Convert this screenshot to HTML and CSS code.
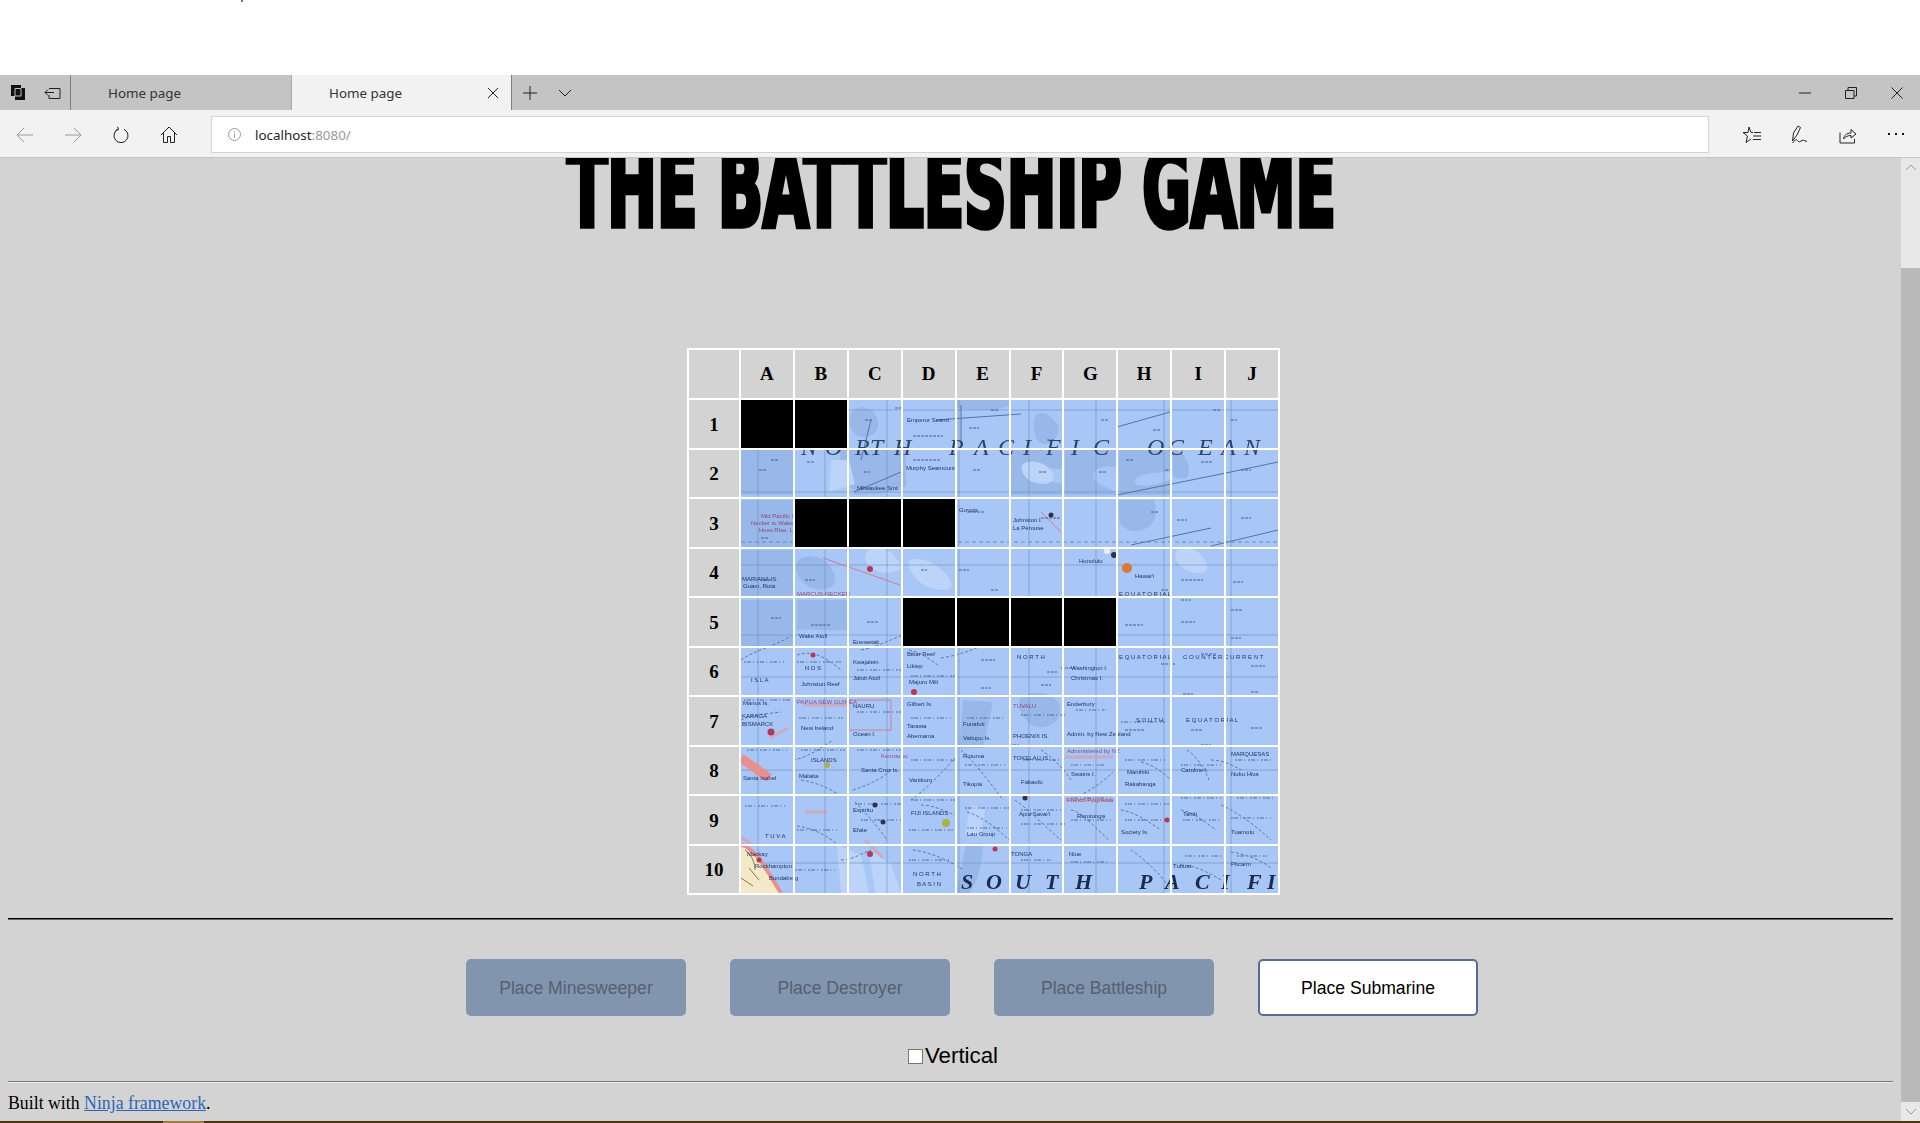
FILE: index.html
```html
<!DOCTYPE html>
<html lang="en">
<head>
    <meta charset="utf-8">
    <title>Home page</title>
    <link rel="stylesheet" href="styles.css">
</head>
<body>
    <div class="top-strip"><span class="speck"></span></div>

    <!-- Browser tabs -->
    <div class="tabbar">
        <div class="tab-tools">
            <span class="icon-btn">
                <svg width="16" height="17" viewBox="0 0 16 17"><path class="solid" d="M1 1h10v3h4v12H5v-4H1z"/><path class="gap" d="M5 4.500h6V12H5z"/></svg>
            </span>
            <span class="icon-btn">
                <svg width="18" height="16" viewBox="0 0 18 16"><path class="line" d="M5 3.500h11v10H5V10M1 7.500h9M4 4.500l-3 3 3 3"/></svg>
            </span>
        </div>
        <div class="tab">Home page</div>
        <div class="tab active">
            Home page
            <svg class="tab-close" width="12" height="12" viewBox="0 0 12 12"><path class="line" d="M1 1l10 10M11 1L1 11"/></svg>
        </div>
        <span class="icon-btn">
            <svg width="16" height="16" viewBox="0 0 16 16"><path class="line" d="M8 1v14M1 8h14"/></svg>
        </span>
        <span class="icon-btn">
            <svg width="14" height="8" viewBox="0 0 14 8"><path class="line" d="M1 1l6 6 6-6"/></svg>
        </span>
        <div class="spacer"></div>
        <span class="win-btn">
            <svg width="12" height="2" viewBox="0 0 12 2"><path class="line" d="M0 1h12"/></svg>
        </span>
        <span class="win-btn">
            <svg width="12" height="12" viewBox="0 0 12 12"><path class="line" d="M3 3V.5h8.500V9H9M.5 3.500H9V11.500H.5z"/></svg>
        </span>
        <span class="win-btn">
            <svg width="12" height="12" viewBox="0 0 12 12"><path class="line" d="M.5.5l11 11M11.500.5l-11 11"/></svg>
        </span>
    </div>

    <!-- Address bar -->
    <div class="toolbar">
        <span class="tool-btn">
            <svg width="18" height="16" viewBox="0 0 18 16"><path class="line faded" d="M17 8H1M8 1L1 8l7 7"/></svg>
        </span>
        <span class="tool-btn">
            <svg width="18" height="16" viewBox="0 0 18 16"><path class="line faded" d="M1 8h16M10 1l7 7-7 7"/></svg>
        </span>
        <span class="tool-btn">
            <svg width="16" height="18" viewBox="0 0 16 18"><path class="line" d="M5 3.300A7 7 0 1 0 11 3.300M4.500.8L5.500 3.500 2.500 4.500"/></svg>
        </span>
        <span class="tool-btn">
            <svg width="18" height="18" viewBox="0 0 18 18"><path class="line" d="M1 9l8-8 8 8M3.500 7v9.500H7.500V10.500h3v6h4V7"/></svg>
        </span>
        <div class="address">
            <svg width="13" height="13" viewBox="0 0 13 13"><circle class="line faded" cx="6.500" cy="6.500" r="6"/><path class="line faded" d="M6.500 5.500v4.500M6.500 3v1.200"/></svg>
            <span class="host">localhost<span class="port">:8080/</span></span>
        </div>
        <span class="tool-btn">
            <svg width="20" height="18" viewBox="0 0 20 18"><path class="line" d="M7 1l2 5.500h2M1 6.500h5L7 1M1 6.500l4.500 3.500L4 16.500l5-3.500M12 6.500h7M11 10h8M11 13.500h8"/></svg>
        </span>
        <span class="tool-btn">
            <svg width="18" height="20" viewBox="0 0 18 20"><path class="line" d="M1.500 16L2.500 8 7 1l2.500 1.500L6 10zM1.500 18c2-3 4-4 5-2.500s2 2 3.500.5 3-.5 6 .5"/></svg>
        </span>
        <span class="tool-btn">
            <svg width="18" height="18" viewBox="0 0 18 18"><path class="line" d="M1 6.500v10.500h14.500V13M4.500 13c.5-3.500 3-6 7.500-6V3.500L17 8l-5 4V9.500c-3 0-5.500 1-7.500 3.500z"/></svg>
        </span>
        <span class="tool-btn">
            <svg width="16" height="3" viewBox="0 0 16 3"><path class="solid" d="M0 0h2v2H0zM7 0h2v2H7zM14 0h2v2h-2z"/></svg>
        </span>
    </div>

    <div class="viewport">
        <div class="page">
            <h1 class="title">THE BATTLESHIP GAME</h1>

            <!-- The board, the sea chart lies under the cells -->
            <div class="board">
                <svg class="chart" viewBox="0 0 537 493">
                    <rect class="sea" width="537" height="493"/>

                    <!-- depth shading -->
                    <path class="deep" d="M113 10c8-6 18-2 22 6s3 16-6 20-18-2-20-10 0-12 4-16zM215 0h53v6c-12 4-30 6-53 2zM296 14c8-4 14 2 20 10s-4 22-14 20-12-24-6-30zM0 50h52v45H0zM98 50h19v45c-10-6-16-20-19-45zM113 50h52v36c-20 10-40 8-52 9zM270 50h53v18c-10 4-20-4-28 0s-2 14 14 14 14 6 14 13h-53zM324 50h53v18c-12-4-28 0-24 10s14 6 24 17h-53zM378 50h52v22c-14 0-34 2-36 9s20 6 36-2v16h-52zM432 50c10 0 14 8 16 18s-6 14-16 8zM0 100h52v48H0zM378 100h35c4 12 2 26-12 30s-22-4-23-10zM0 150h52v48H0zM60 158c16-6 30 4 34 18s-18 18-30 8-10-22-4-26zM0 200h52v48H0zM56 200h52v30c-20 2-34-2-52 0zM280 297c14-8 30-4 36 4s4 24-14 26-28-20-22-30zM222 300l30 2-10 46H218zM225 445l16-2c2 18-4 36-12 50h-14z"/>
                    <path class="pale" d="M90 60l18 0 6 24-26 8zM282 64c10-6 26 0 30 10s-10 12-20 8-14-14-10-18zM128 150c14-6 24 2 30 12s-12 14-24 8-12-16-6-20zM170 160c12-4 30 6 38 18s-4 14-18 10-28-24-20-28zM96 445l24 10 8 38h-28zM128 450l22 14 10 29h-26zM230 405l14 4-4 28-16-4zM440 148c12-2 22 6 26 16s-14 12-24 4-10-18-2-20zM170 100c8 0 12 4 12 8s-6 8-12 4-6-12 0-12zM224 205l40 10-6 26-30-8z"/>

                    <!-- meridians and parallels -->
                    <path class="grid-line" d="M17 0V493M84 0V493M146 0V493M218 0V493M288 0V493M355 0V493M423 0V493M490 0V493"/>
                    <path class="grid-line" d="M0 10H537M0 92H537M0 165H537M0 235H537M0 277H537M0 370H537M0 463H537"/>
                    <path class="dash-line" d="M0 142H537"/>
                    <path class="ridge" d="M376 27L429 12M376 95L485 73M485 73L537 62M195 20L280 14M113 92L160 72M470 146L537 130M390 145L470 128M120 60L130 20M220 5V44"/>
                    <path class="pink-line" d="M82 158L159 185M108 300H150V330H108zM300 112L320 132"/>

                    <!-- coast of Queensland and the reefs above it -->
                    <path class="land" d="M0 445L5 446L18 458L29 475L40 493H0z"/>
                    <path class="coast" d="M0 445L5 446L18 458L29 475L40 493"/>
                    <path class="coast wide" d="M0 358L14 368L28 378"/>
                    <path class="coast thin" d="M0 437L12 445M29 338L47 328M62 305H106M324 357H372M324 400H372M240 296H268M64 412H86M124 440L142 458"/>
                    <path class="shore" d="M4 450c6 4 10 12 10 20M8 468l10 12M0 478l12 8"/>

                    <!-- island chains -->
                    <path class="chain" d="M0 260c14-10 30-12 50-24M56 255c14-5 28 1 44 15M120 250c20-4 32-12 50-18M168 250c10 2 20 8 30 16M200 258c14-2 26-6 40-12M0 320c12-6 26-6 40-8M52 360c14-2 28-12 40-20M60 380c14 2 28 8 40 16M112 390c12-4 28-10 38-20M170 400c14-10 32-28 44-42M220 350c14 12 30 34 42 50M300 350c10 6 22 18 30 30M338 396c12-6 24-14 34-24M400 362c10 2 22 10 30 18M446 350c10 6 18 20 22 30M470 360c10 0 20 4 30 10M56 426c14 2 28 8 40 18M114 402c10 10 24 26 32 38M180 405c12 0 24 6 36 11M226 412c14 4 30 16 42 28M274 400c14 10 32 28 46 40M330 410c12 2 26 20 38 30M380 410c14 2 28 12 40 20M440 410c12 2 24 12 35 20M480 405c18 8 36 22 50 35M100 460c10 0 20-6 30-10M172 450c16 2 36 10 50 20M390 450c12 8 30 24 40 40M440 465c14 0 28 8 40 15M490 452c14 2 30 8 40 16"/>
                    <path class="speckle" d="M3 262h40M56 262h44M116 270h46M170 276h44M3 300h46M58 318h44M116 312h44M170 318h40M226 318h38M280 315h44M335 310h30M380 322h44M6 350h40M60 350h44M116 350h46M170 360h46M224 365h40M282 360h40M330 365h34M384 360h40M440 365h40M494 360h36M6 395h40M62 395h44M114 404h46M170 400h44M224 408h44M280 410h40M330 398h40M384 404h44M440 398h40M496 398h36M4 406h40M56 430h40M120 420h40M168 430h44M226 428h40M280 424h44M330 420h40M384 420h42M442 420h36M490 418h40M54 470h40M168 460h40M280 460h30M330 462h36M444 456h40M496 456h30"/>

                    <!-- soundings and short arrows -->
                    <path class="mark" d="M22 17h10M124 20h7M154 8h7M172 36h30M228 28h10M250 10h7M306 40h8M360 20h8M412 30h8M472 10h8M490 20h6M18 70h8M30 60h8M66 62h8M123 72h6M172 60h28M232 70h8M298 72h8M358 72h7M385 60h8M424 70h6M460 62h12M500 70h10M20 138h8M60 148h6M180 112h18M228 112h16M300 118h20M410 112h8M436 120h10M500 118h10M20 180h10M64 180h10M180 170h6M218 170h10M250 190h8M420 190h8M440 180h22M492 182h10M440 200h10M490 210h12M30 218h10M70 225h20M126 222h12M170 225h4M226 222h2M270 225h10M384 225h18M440 222h14M490 238h10M240 260h14M306 272h10M420 264h14M460 254h16M510 266h14M320 268h14M240 288h10M300 285h10M442 294h10M510 292h8M450 330h12M510 328h12M460 345h10M268 345h10M384 330h20"/>

                    <!-- towns and atolls -->
                    <circle class="spot red" cx="129" cy="169" r="3"/>
                    <circle class="spot dark" cx="373" cy="155" r="3"/>
                    <circle class="spot orange" cx="386" cy="168" r="5"/>
                    <circle class="spot white" cx="366" cy="151" r="3"/>
                    <circle class="spot red" cx="173" cy="292" r="3"/>
                    <circle class="spot red" cx="72" cy="255" r="2.500"/>
                    <circle class="spot red" cx="30" cy="332" r="3.500"/>
                    <circle class="spot green" cx="86" cy="365" r="3"/>
                    <circle class="spot green" cx="205" cy="423" r="4"/>
                    <circle class="spot dark" cx="134" cy="405" r="2.500"/>
                    <circle class="spot dark" cx="142" cy="422" r="2.500"/>
                    <circle class="spot red" cx="426" cy="420" r="2.500"/>
                    <circle class="spot red" cx="129" cy="454" r="3"/>
                    <circle class="spot red" cx="254" cy="449" r="2.500"/>
                    <circle class="spot red" cx="18" cy="460" r="2.500"/>
                    <circle class="spot dark" cx="284" cy="398" r="2.500"/>
                    <circle class="spot red" cx="290" cy="240" r="2.500"/>
                    <circle class="spot dark" cx="310" cy="115" r="2.500"/>

                    <!-- ocean names -->
                    <text class="ocean" y="55" x="60 84 114 129 153 208 233 257 282 305 330 352 406 427 457 480 503">NORTHPACIFICOCEAN</text>
                    <text class="ocean south" y="489" x="220 245 274 304 334 398 424 454 480 506 526">SOUTHPACIFI</text>

                    <!-- small map lettering -->
                    <text class="label violet" x="20" y="118">Mid Pacific Mts.</text>
                    <text class="label violet" x="10" y="125">Necker to Wake</text>
                    <text class="label violet" x="18" y="132">Hess Rise, Line</text>
                    <text class="label" x="116" y="90">Milwaukee Smt.</text>
                    <text class="label" x="165" y="70">Murphy Seamount</text>
                    <text class="label" x="166" y="22">Emperor Seamt.</text>
                    <text class="label" x="218" y="112">Guyots</text>
                    <text class="label" x="272" y="122">Johnston I.</text>
                    <text class="label" x="272" y="130">La Pérouse</text>
                    <text class="label" x="1" y="181">MARIANA IS.</text>
                    <text class="label" x="2" y="188">Guam, Rota</text>
                    <text class="label violet" x="56" y="196">MARCUS-NECKER</text>
                    <text class="label" x="58" y="238">Wake Atoll</text>
                    <text class="label" x="112" y="244">Enewetak</text>
                    <text class="label" x="10" y="282">I S L A</text>
                    <text class="label" x="64" y="270">N D S</text>
                    <text class="label" x="60" y="286">Johnston Reef</text>
                    <text class="label" x="112" y="264">Kwajalein</text>
                    <text class="label" x="112" y="280">Jaluit Atoll</text>
                    <text class="label" x="166" y="256">Bikar Reef</text>
                    <text class="label" x="166" y="268">Likiep</text>
                    <text class="label" x="168" y="284">Majuro Mili</text>
                    <text class="label" x="338" y="163">Honolulu</text>
                    <text class="label" x="394" y="178">Hawai'i</text>
                    <text class="label" x="330" y="270">Washington I.</text>
                    <text class="label" x="330" y="280">Christmas I.</text>
                    <text class="label" x="378" y="196">E Q U A T O R I A L</text>
                    <text class="label" x="378" y="259">E Q U A T O R I A L</text>
                    <text class="label" x="442" y="259">C O U N T E R C U R R E N T</text>
                    <text class="label" x="276" y="259">N O R T H</text>
                    <text class="label" x="395" y="322">S O U T H</text>
                    <text class="label" x="445" y="322">E Q U A T O R I A L</text>
                    <text class="label" x="1" y="318">KARAGA</text>
                    <text class="label" x="1" y="326">BISMARCK</text>
                    <text class="label" x="2" y="305">Manus Is.</text>
                    <text class="label violet" x="56" y="304">PAPUA NEW GUINEA</text>
                    <text class="label" x="60" y="330">New Ireland</text>
                    <text class="label" x="112" y="308">NAURU</text>
                    <text class="label" x="112" y="336">Ocean I.</text>
                    <text class="label" x="166" y="306">Gilbert Is.</text>
                    <text class="label" x="166" y="328">Tarawa</text>
                    <text class="label" x="166" y="338">Abemama</text>
                    <text class="label violet" x="272" y="308">TUVALU</text>
                    <text class="label" x="222" y="326">Funafuti</text>
                    <text class="label" x="222" y="340">Vaitupu Is.</text>
                    <text class="label" x="272" y="338">PHOENIX IS.</text>
                    <text class="label" x="326" y="306">Enderbury</text>
                    <text class="label" x="326" y="336">Admin. by New Zealand</text>
                    <text class="label" x="2" y="380">Santa Isabel</text>
                    <text class="label" x="70" y="362">ISLANDS</text>
                    <text class="label" x="58" y="378">Malaita</text>
                    <text class="label" x="120" y="372">Santa Cruz Is.</text>
                    <text class="label violet" x="140" y="358">Kermadec</text>
                    <text class="label" x="168" y="382">Vanikoro</text>
                    <text class="label" x="222" y="358">Rotuma</text>
                    <text class="label" x="222" y="386">Tikopia</text>
                    <text class="label" x="272" y="360">TOKELAU IS.</text>
                    <text class="label" x="280" y="384">Fakaofo</text>
                    <text class="label violet" x="326" y="353">Administered by NZ</text>
                    <text class="label" x="330" y="376">Swains I.</text>
                    <text class="label" x="386" y="374">Manihiki</text>
                    <text class="label" x="384" y="386">Rakahanga</text>
                    <text class="label" x="440" y="372">Caroline I.</text>
                    <text class="label" x="490" y="356">MARQUESAS</text>
                    <text class="label" x="490" y="376">Nuku Hiva</text>
                    <text class="label" x="170" y="415">FIJI ISLANDS</text>
                    <text class="label" x="226" y="436">Lau Group</text>
                    <text class="label" x="112" y="412">Espiritu</text>
                    <text class="label" x="112" y="432">Efate</text>
                    <text class="label violet" x="326" y="402">French Polynesia</text>
                    <text class="label" x="380" y="434">Society Is.</text>
                    <text class="label" x="278" y="416">Apia Savai'i</text>
                    <text class="label" x="336" y="418">Rarotonga</text>
                    <text class="label" x="442" y="416">Tahiti</text>
                    <text class="label" x="490" y="434">Tuamotu</text>
                    <text class="label" x="24" y="438">T U V A</text>
                    <text class="label" x="6" y="456">Mackay</text>
                    <text class="label" x="14" y="468">Rockhampton</text>
                    <text class="label" x="28" y="480">Bundaberg</text>
                    <text class="label" x="172" y="476">N O R T H</text>
                    <text class="label" x="176" y="486">B A S I N</text>
                    <text class="label" x="270" y="456">TONGA</text>
                    <text class="label" x="328" y="456">Niue</text>
                    <text class="label" x="432" y="468">Tubuai</text>
                    <text class="label" x="490" y="466">Pitcairn</text>
                </svg>

                <div class="grid">
                    <div class="cell head"></div>
                    <div class="cell head">A</div><div class="cell head">B</div><div class="cell head">C</div><div class="cell head">D</div><div class="cell head">E</div>
                    <div class="cell head">F</div><div class="cell head">G</div><div class="cell head">H</div><div class="cell head">I</div><div class="cell head">J</div>

                    <div class="cell head">1</div>
                    <div class="cell ship"></div><div class="cell ship"></div><div class="cell"></div><div class="cell"></div><div class="cell"></div>
                    <div class="cell"></div><div class="cell"></div><div class="cell"></div><div class="cell"></div><div class="cell"></div>

                    <div class="cell head">2</div>
                    <div class="cell"></div><div class="cell"></div><div class="cell"></div><div class="cell"></div><div class="cell"></div>
                    <div class="cell"></div><div class="cell"></div><div class="cell"></div><div class="cell"></div><div class="cell"></div>

                    <div class="cell head">3</div>
                    <div class="cell"></div><div class="cell ship"></div><div class="cell ship"></div><div class="cell ship"></div><div class="cell"></div>
                    <div class="cell"></div><div class="cell"></div><div class="cell"></div><div class="cell"></div><div class="cell"></div>

                    <div class="cell head">4</div>
                    <div class="cell"></div><div class="cell"></div><div class="cell"></div><div class="cell"></div><div class="cell"></div>
                    <div class="cell"></div><div class="cell"></div><div class="cell"></div><div class="cell"></div><div class="cell"></div>

                    <div class="cell head">5</div>
                    <div class="cell"></div><div class="cell"></div><div class="cell"></div><div class="cell ship"></div><div class="cell ship"></div>
                    <div class="cell ship"></div><div class="cell ship"></div><div class="cell"></div><div class="cell"></div><div class="cell"></div>

                    <div class="cell head">6</div>
                    <div class="cell"></div><div class="cell"></div><div class="cell"></div><div class="cell"></div><div class="cell"></div>
                    <div class="cell"></div><div class="cell"></div><div class="cell"></div><div class="cell"></div><div class="cell"></div>

                    <div class="cell head">7</div>
                    <div class="cell"></div><div class="cell"></div><div class="cell"></div><div class="cell"></div><div class="cell"></div>
                    <div class="cell"></div><div class="cell"></div><div class="cell"></div><div class="cell"></div><div class="cell"></div>

                    <div class="cell head">8</div>
                    <div class="cell"></div><div class="cell"></div><div class="cell"></div><div class="cell"></div><div class="cell"></div>
                    <div class="cell"></div><div class="cell"></div><div class="cell"></div><div class="cell"></div><div class="cell"></div>

                    <div class="cell head">9</div>
                    <div class="cell"></div><div class="cell"></div><div class="cell"></div><div class="cell"></div><div class="cell"></div>
                    <div class="cell"></div><div class="cell"></div><div class="cell"></div><div class="cell"></div><div class="cell"></div>

                    <div class="cell head">10</div>
                    <div class="cell"></div><div class="cell"></div><div class="cell"></div><div class="cell"></div><div class="cell"></div>
                    <div class="cell"></div><div class="cell"></div><div class="cell"></div><div class="cell"></div><div class="cell"></div>
                </div>
            </div>

            <hr class="rule">

            <div class="ship-buttons">
                <button class="place" disabled>Place Minesweeper</button>
                <button class="place" disabled>Place Destroyer</button>
                <button class="place" disabled>Place Battleship</button>
                <button class="place current">Place Submarine</button>
            </div>

            <label class="vertical"><input type="checkbox">Vertical</label>

            <hr class="foot-rule">

            <div class="footer">Built with <a href="#">Ninja framework</a>.</div>
        </div>

        <div class="scrollbar">
            <span class="scroll-arrow">
                <svg width="12" height="7" viewBox="0 0 12 7"><path class="line faded" d="M1 6l5-5 5 5"/></svg>
            </span>
            <div class="scroll-gap"></div>
            <div class="scroll-thumb"></div>
            <span class="scroll-arrow">
                <svg width="12" height="7" viewBox="0 0 12 7"><path class="line faded" d="M1 1l5 5 5-5"/></svg>
            </span>
        </div>
    </div>

    <div class="taskbar"><span class="task-item"></span></div>
</body>
</html>
```

FILE: styles.css
```css
* {
    box-sizing: border-box;
}

html, body {
    height: 100%;
}

body {
    margin: 0;
    display: flex;
    flex-direction: column;
    overflow: hidden;
    background-color: white;
    font-family: "Liberation Serif", serif;
    color: black;
}

/* Strip above the browser window */
.top-strip {
    height: 75px;
    flex: none;
    padding-left: 241px;
}

.speck {
    display: block;
    width: 2px;
    height: 2px;
    background-color: #777;
}

/* Shared icon strokes */
.line {
    fill: none;
    stroke: #222;
    stroke-width: 1;
}

.line.faded {
    stroke: #9a9a9a;
}

.solid {
    fill: #111;
}

.gap {
    fill: none;
    stroke: #c2c2c2;
    stroke-width: 1;
}

/* Tabs */
.tabbar {
    height: 35px;
    flex: none;
    display: flex;
    align-items: stretch;
    background-color: #c4c4c4;
    font-family: "Noto Sans", sans-serif;
    font-size: 13.4px;
    color: #333;
}

.tab-tools {
    width: 71px;
    padding-left: 1px;
    display: flex;
    border-right: 1px solid #7f7f7f;
}

.icon-btn {
    width: 35px;
    display: flex;
    align-items: center;
    justify-content: center;
}

.tab {
    width: 221px;
    display: flex;
    align-items: center;
    padding-left: 37px;
    border-right: 1px solid #a9a9a9;
}

.tab.active {
    width: 220px;
    position: relative;
    background-color: #f2f2f2;
    border-right: 1px solid #7f7f7f;
}

.tab-close {
    margin-left: auto;
    margin-right: 12px;
}

.spacer {
    flex: 1;
}

.win-btn {
    width: 46px;
    display: flex;
    align-items: center;
    justify-content: center;
}

/* Address bar */
.toolbar {
    height: 48px;
    flex: none;
    padding: 2px 0 0 1px;
    display: flex;
    align-items: center;
    background-color: #f2f2f2;
    border-bottom: 1px solid #c6c6c6;
}

.tool-btn {
    width: 48px;
    height: 37px;
    flex: none;
    display: flex;
    align-items: center;
    justify-content: center;
}

.address {
    flex: 1;
    height: 37px;
    margin: 0 19px 0 18px;
    padding-left: 16px;
    display: flex;
    align-items: center;
    gap: 14px;
    background-color: white;
    border: 1px solid #d4d4d4;
    font-family: "Noto Sans", sans-serif;
    font-size: 13.4px;
    color: #222;
}

.port {
    color: #999;
}

/* Page area, scrolled a little way down as in the shot */
.viewport {
    flex: 1;
    min-height: 0;
    display: flex;
    background-color: lightgray;
}

.page {
    flex: 1;
    min-width: 0;
    padding: 0 8px;
    overflow: hidden;
}

.title {
    margin: -21px 0 0;
    padding-left: 3px;
    height: 103px;
    line-height: 103px;
    text-align: center;
    white-space: nowrap;
    font-family: "DejaVu Sans", sans-serif;
    font-stretch: condensed;
    font-weight: bold;
    font-size: 108px;
    -webkit-text-stroke: 5.500px black;
    transform: scaleX(0.609);
}

/* Board */
.board {
    position: relative;
    width: 593px;
    height: 547px;
    margin: 108px 0 0 679px;
    border: 2px solid white;
}

.chart {
    position: absolute;
    left: 52px;
    top: 50px;
    width: 537px;
    height: 493px;
    filter: blur(0.35px);
}

.grid {
    position: relative;
    height: 100%;
    display: grid;
    grid-template-columns: 50px repeat(10, 1fr);
    grid-template-rows: 48px repeat(10, 1fr);
    gap: 2px;
}

.cell {
    box-shadow: 0 0 0 1px white;
}

.head {
    display: flex;
    align-items: center;
    justify-content: center;
    background-color: lightgray;
    font-weight: bold;
    font-size: 19px;
}

/* Row numbers sit a touch lower than the column letters */
.head:nth-child(11n+1) {
    padding-top: 2px;
}

.ship {
    background-color: black;
}

/* Chart layers */
.sea { fill: #a9c7f6; }
.deep { fill: #98b8ea; }
.pale { fill: #bcd4fa; }
.grid-line { fill: none; stroke: #6f8fb8; stroke-width: 0.8; opacity: 0.75; }
.dash-line { fill: none; stroke: #5f7fae; stroke-width: 0.8; stroke-dasharray: 4 3; }
.ridge { fill: none; stroke: #4f74ad; stroke-width: 1; }
.pink-line { fill: none; stroke: #cf7f92; stroke-width: 1; }
.land { fill: #f3e9c9; }
.coast { fill: none; stroke: #ea8f8f; stroke-width: 4; }
.coast.wide { stroke-width: 9; }
.coast.thin { stroke-width: 3; opacity: 0.55; }
.shore { fill: none; stroke: #7d7a50; stroke-width: 1; }
.chain { fill: none; stroke: #4a659a; stroke-width: 1; stroke-dasharray: 3 2; opacity: 0.8; }
.speckle { fill: none; stroke: #3d578a; stroke-width: 1.300; stroke-dasharray: 2 1 4 2 1 3; opacity: 0.55; }
.mark { fill: none; stroke: #45608f; stroke-width: 1; stroke-dasharray: 3 1; }
.spot.red { fill: #b23a55; }
.spot.dark { fill: #33304a; }
.spot.orange { fill: #d9783a; }
.spot.white { fill: #f0ece0; }
.spot.green { fill: #a9b24a; }

.ocean {
    font-family: "Liberation Serif", serif;
    font-style: italic;
    font-size: 24px;
    fill: #2f4468;
}

.ocean.south {
    font-weight: bold;
    font-size: 22px;
    fill: #1c2b4c;
}

.label {
    font-family: "Liberation Sans", sans-serif;
    font-size: 6px;
    fill: #1f3566;
}

.label.violet {
    fill: #8a4a78;
}

hr {
    margin: 0;
}

.rule {
    margin-top: 23px;
    border: none;
    border-top: 1px solid black;
    border-bottom: 1px solid #666;
}

/* Ship buttons */
.ship-buttons {
    margin: 39px 0 0 458px;
    display: flex;
    gap: 44px;
}

.place {
    width: 220px;
    height: 57px;
    padding-top: 3px;
    border: 2px solid #8295ae;
    border-radius: 5px;
    background-color: #8295ae;
    font-family: "Liberation Sans", sans-serif;
    font-size: 17.6px;
    color: #566070;
}

.place.current {
    border-color: #566c96;
    background-color: white;
    color: black;
}

.vertical {
    margin-top: 26px;
    height: 28px;
    padding-left: 5px;
    display: flex;
    align-items: center;
    justify-content: center;
    font-family: "Liberation Sans", sans-serif;
    font-size: 22.3px;
}

.vertical input {
    width: 15px;
    height: 15px;
    margin: 1px 2px 0 0;
    appearance: none;
    background-color: white;
    border: 1px solid #767676;
}

.foot-rule {
    margin-top: 11px;
    border: none;
    border-top: 1px solid #777;
    border-bottom: 1px solid #eee;
}

.footer {
    margin-top: 10px;
    font-size: 17.8px;
}

.footer a {
    color: #2a66b8;
}

/* Scrollbar */
.scrollbar {
    width: 19px;
    flex: none;
    display: flex;
    flex-direction: column;
    background-color: #e8e8e8;
}

.scroll-arrow {
    height: 19px;
    flex: none;
    display: flex;
    align-items: center;
    justify-content: center;
}

.scroll-gap {
    height: 91px;
    flex: none;
}

.scroll-thumb {
    flex: 1;
    background-color: #b9b9b9;
}

/* Desktop taskbar edge at the very bottom */
.taskbar {
    height: 2px;
    flex: none;
    padding-left: 163px;
    background-color: #4a3414;
}

.task-item {
    display: block;
    width: 41px;
    height: 2px;
    background-color: #9c7c3c;
}
```
